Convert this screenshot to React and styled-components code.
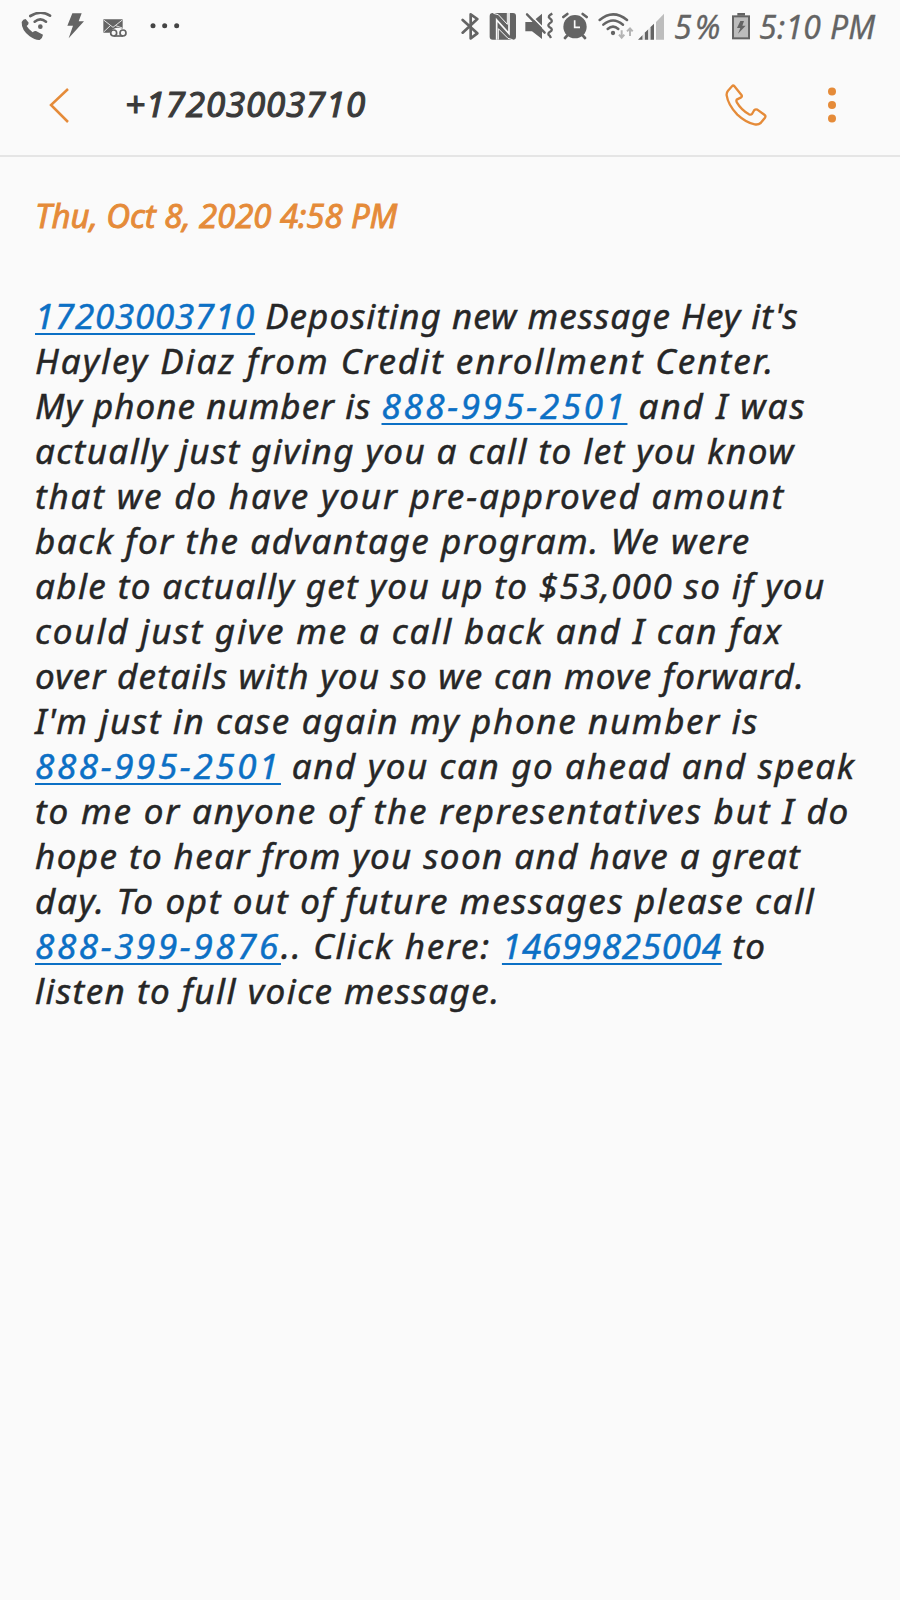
import React from 'react';
import styled, { createGlobalStyle } from 'styled-components';

const GlobalStyle = createGlobalStyle`
  body {
    margin: 0;
    background: #fafafa;
    font-family: 'Noto Sans', 'Open Sans', sans-serif;
    font-style: italic;
  }
`;

const Screen = styled.div`
  width: 900px;
  height: 1600px;
  overflow: hidden;
  background: #fafafa;
`;

const StatusBar = styled.div`
  display: flex;
  height: 54px;
  color: #646464;
`;

const StatusGroup = styled.div`
  display: flex;
  align-items: center;
  width: ${({ width }) => width}px;
`;

const StatusIcon = styled.svg`
  flex: none;
  height: 30px;
  margin-left: ${({ $left }) => $left}px;
  fill: currentColor;
  stroke: none;
`;

const StatusText = styled.span`
  flex: none;
  width: ${({ width }) => width}px;
  margin-left: ${({ $left }) => $left}px;
  font-size: 32px;
  line-height: 54px;
  letter-spacing: ${({ $spacing }) => $spacing}px;
  white-space: nowrap;
  -webkit-text-stroke: 0.3px currentColor;
`;

const Header = styled.header`
  display: flex;
  align-items: center;
  height: 101px;
  border-bottom: 2px solid #e5e5e5;
  color: #e58b39;
`;

const HeaderButton = styled.button`
  display: flex;
  padding: 0;
  margin-left: ${({ $left }) => $left}px;
  border: none;
  background: none;
  color: inherit;

  svg {
    fill: none;
    stroke: currentColor;
    stroke-width: 2.5;
  }
`;

const Title = styled.h1`
  width: 250px;
  margin: 0 0 1px 55px;
  font-size: 35px;
  font-weight: 400;
  line-height: 48px;
  letter-spacing: 0.75px;
  color: #3a3a3a;
  -webkit-text-stroke: 1.1px currentColor;
`;

const Message = styled.main`
  padding: 35px 35px 0;
`;

const DateLine = styled.p`
  margin: 0 0 53px;
  font-size: 33px;
  line-height: 48px;
  letter-spacing: -0.1px;
  color: #e58b39;
  -webkit-text-stroke: 0.9px currentColor;
`;

const Line = styled.div`
  height: 45px;
  font-size: 35px;
  line-height: 45px;
  white-space: pre;
  color: #262626;
  -webkit-text-stroke: 0.5px currentColor;
`;

const Part = styled.span`
  letter-spacing: ${({ $spacing }) => $spacing}px;
`;

const NumberLink = styled.a`
  letter-spacing: ${({ $spacing }) => $spacing}px;
  color: #0c70c5;
  text-decoration: underline;
  text-decoration-thickness: 2px;
  text-decoration-skip-ink: none;
  text-underline-offset: 4px;
`;

const lines = [
  [{ link: '17203003710', gap: 0.72 }, { text: " Depositing new message Hey it's", gap: 1.05 }],
  [{ text: 'Hayley Diaz from Credit enrollment Center.', gap: 1.98 }],
  [{ text: 'My phone number is ', gap: 1.02 }, { link: '888-995-2501', gap: 2.6 }, { text: ' and I was', gap: 1.97 }],
  [{ text: 'actually just giving you a call to let you know', gap: 1.43 }],
  [{ text: 'that we do have your pre-approved amount', gap: 1.85 }],
  [{ text: 'back for the advantage program. We were', gap: 1.58 }],
  [{ text: 'able to actually get you up to $53,000 so if you', gap: 1.38 }],
  [{ text: 'could just give me a call back and I can fax', gap: 1.86 }],
  [{ text: 'over details with you so we can move forward.', gap: 1.25 }],
  [{ text: "I'm just in case again my phone number is", gap: 1.65 }],
  [{ link: '888-995-2501', gap: 2.6 }, { text: ' and you can go ahead and speak', gap: 1.62 }],
  [{ text: 'to me or anyone of the representatives but I do', gap: 1.85 }],
  [{ text: 'hope to hear from you soon and have a great', gap: 1.42 }],
  [{ text: 'day. To opt out of future messages please call', gap: 1.67 }],
  [
    { link: '888-399-9876', gap: 2.6 },
    { text: '.. Click here: ', gap: 1.77 },
    { link: '14699825004', gap: 0.7 },
    { text: ' to', gap: 1.4 },
  ],
  [{ text: 'listen to full voice message.', gap: 1.47 }],
];

const stroke = (width) => ({ fill: 'none', stroke: 'currentColor', strokeWidth: width });

const WifiCallIcon = () => (
  <StatusIcon $left={20} width="32" viewBox="60 36 96 90">
    <path d="M65 66 Q69 57 77 57 L86 68 Q86 73 80 78 Q86 88 98 97 Q103 92 108 93 L129 104 Q128 114 119 120 Q105 121 89 109 Q64 90 65 66Z" />
    <path d="M91 48 Q122 29 150 47" {...stroke(8)} strokeLinecap="round" />
    <path d="M104 65 Q121 51 138 65" {...stroke(8)} strokeLinecap="round" />
    <circle cx="121" cy="80" r="7" />
  </StatusIcon>
);

const BoltIcon = () => (
  <StatusIcon $left={14} width="19" viewBox="198 36 57 90">
    <path d="M217 40 H245 L236 64 H252 L206 115 L219 77 H202Z" />
  </StatusIcon>
);

const VoicemailIcon = () => (
  <StatusIcon $left={17} width="26" viewBox="306 36 78 90">
    <path d="M310 58 H368 V86 Q352 81 342 86 Q333 89 329 98 H310Z" />
    <path d="M311 60 L339 82 L367 60 M311 96 L331 77 M367 84 L347 77" fill="none" stroke="#fafafa" strokeWidth="2.5" />
    <g {...stroke(5)}>
      <circle cx="341" cy="99" r="9" />
      <circle cx="369" cy="99" r="9" />
      <path d="M341 108 H369" />
    </g>
  </StatusIcon>
);

const MoreIcon = () => (
  <StatusIcon $left={22} width="30" viewBox="450 36 90 90">
    <g fill="#444">
      <circle cx="459" cy="77" r="7.5" />
      <circle cx="494" cy="77" r="7.5" />
      <circle cx="530" cy="77" r="7.5" />
    </g>
  </StatusIcon>
);

const BluetoothIcon = () => (
  <StatusIcon $left={0} width="19" viewBox="33 36 57 90">
    <path d="M38 60 L82 100 L62 115 V43 L82 57 L38 98" {...stroke(8)} strokeLinecap="round" strokeLinejoin="round" />
  </StatusIcon>
);

const NfcIcon = () => (
  <StatusIcon $left={9} width="28" viewBox="117 36 84 90">
    <rect x="119" y="39" width="79" height="80" rx="9" />
    <g fill="none" stroke="#fafafa">
      <path d="M140 119 V60 L177 101 V39" strokeWidth="5" />
      <path d="M130 40 L145 44 L172 73 V39" strokeWidth="3" />
      <path d="M145 119 V86 L174 115 L188 119" strokeWidth="3" />
    </g>
  </StatusIcon>
);

const MuteVibrateIcon = () => (
  <StatusIcon $left={7} width="31" viewBox="222 36 93 90">
    <path d="M226 66 H246 L276 41 V117 L246 94 H226Z" />
    <path d="M232 36 L289 93" fill="none" stroke="#fafafa" strokeWidth="5" />
    <path d="M231 43 L284 98" {...stroke(7)} strokeLinecap="round" />
    <path d="M307 41 Q291 49 299 55 Q312 63 299 70 Q291 76 299 82 Q312 89 299 96 Q291 102 299 107 L303 114" {...stroke(7)} />
  </StatusIcon>
);

const AlarmIcon = () => (
  <StatusIcon $left={7} width="26" viewBox="336 36 78 90">
    <circle cx="375" cy="80" r="35" />
    <path d="M340 51 L352 42 M398 42 L410 51 M352 106 L345 114 M398 106 L405 114" {...stroke(8)} strokeLinecap="round" />
    <path d="M374 61 V82 H390" fill="none" stroke="#fafafa" strokeWidth="5" />
  </StatusIcon>
);

const WifiIcon = () => (
  <StatusIcon $left={9} width="37" viewBox="441 36 111 90">
    <g {...stroke(7.5)} strokeLinecap="round">
      <path d="M449 60 Q489 26 531 60" />
      <path d="M460 74 Q489 49 519 74" />
      <path d="M473 87 Q489 73 505 87" />
    </g>
    <circle cx="489" cy="99" r="6.5" />
    <path d="M515 91 V112 M507 104 L515 113 L523 104 M540 108 V86 M531 94 L540 85 L548 94" fill="none" stroke="#b4b4b4" strokeWidth="6" />
  </StatusIcon>
);

const SignalIcon = () => (
  <StatusIcon $left={3} width="28" viewBox="561 36 84 90">
    <path d="M564 119 L578 105 V119Z M584 119 V98 L595 88 V119Z M601 119 V82 L612 71 V119Z" />
    <path d="M618 119 V66 L642 41 V119Z" fill="#bdbdbd" />
    <path d="M578 105 L584 98 V119 H578Z M595 88 L601 82 V119 H595Z" fill="#e4e4e4" />
  </StatusIcon>
);

const BatteryIcon = () => (
  <StatusIcon $left={7} width="18" viewBox="216 36 54 90">
    <path d="M232 39 H255 V47 H232Z" />
    <rect x="219" y="49" width="48" height="66" fill="#bcbcbc" stroke="currentColor" strokeWidth="6" />
    <path d="M241 63 H252 L247 77 H257 L234 101 L241 84 H231Z" />
  </StatusIcon>
);

const App = () => {
  return (
    <Screen>
      <GlobalStyle />
      <StatusBar>
        <StatusGroup width={461}>
          <WifiCallIcon />
          <BoltIcon />
          <VoicemailIcon />
          <MoreIcon />
        </StatusGroup>
        <StatusGroup width={439}>
          <BluetoothIcon />
          <NfcIcon />
          <MuteVibrateIcon />
          <AlarmIcon />
          <WifiIcon />
          <SignalIcon />
          <StatusText $left={9} width={51} $spacing={3}>5%</StatusText>
          <BatteryIcon />
          <StatusText $left={9} width={120} $spacing={0.3}>5:10 PM</StatusText>
        </StatusGroup>
      </StatusBar>
      <Header>
        <HeaderButton $left={48} aria-label="Back">
          <svg width="22" height="36" viewBox="0 0 22 36">
            <path d="M20 2 L3 18 L20 35" />
          </svg>
        </HeaderButton>
        <Title>+17203003710</Title>
        <HeaderButton $left={350} aria-label="Call">
          <svg width="42" height="42" viewBox="136 70 126 126">
            <path
              strokeWidth="7"
              strokeLinejoin="round"
              d="M163 75 L186 104 Q188 108 183 111 L171 117 Q169 121 172 126 Q185 148 208 161 Q214 163 217 160 L224 148 Q228 145 233 147 L255 163 Q259 166 256 171 L243 187 Q236 193 225 191 Q200 187 173 162 Q145 132 141 104 Q140 96 145 90 L157 77 Q160 73 163 75Z"
            />
          </svg>
        </HeaderButton>
        <HeaderButton $left={60} aria-label="More options">
          <svg width="10" height="36" viewBox="0 0 10 36">
            <g fill="currentColor" stroke="none">
              <circle cx="5" cy="4.5" r="4" />
              <circle cx="5" cy="18" r="4" />
              <circle cx="5" cy="31.5" r="4" />
            </g>
          </svg>
        </HeaderButton>
      </Header>
      <Message>
        <DateLine>Thu, Oct 8, 2020 4:58 PM</DateLine>
        {lines.map((parts, i) => (
          <Line key={i}>
            {parts.map((part) =>
              part.link ? (
                <NumberLink key={part.link} $spacing={part.gap}>{part.link}</NumberLink>
              ) : (
                <Part key={part.text} $spacing={part.gap}>{part.text}</Part>
              )
            )}
          </Line>
        ))}
      </Message>
    </Screen>
  );
};

export default App;
